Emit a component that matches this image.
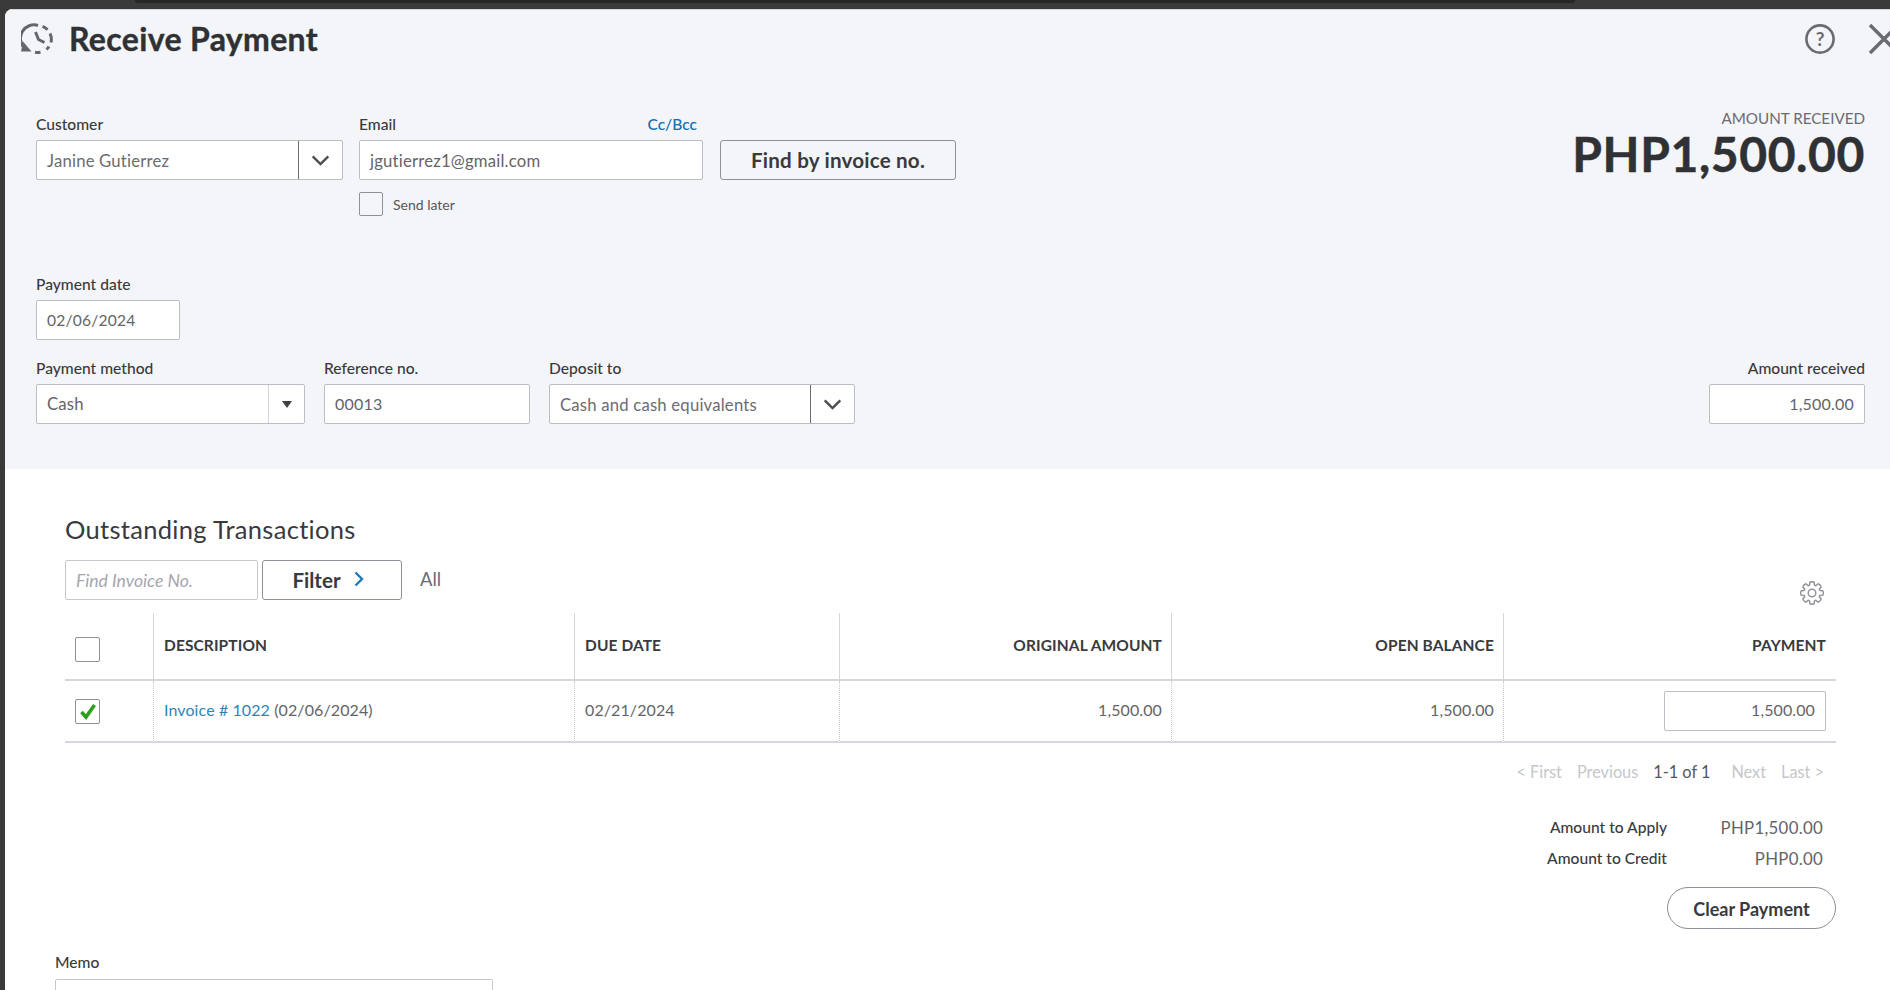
<script>
  // 8 tooth gear outline
  function gear() {
    let d = "";
    for (let i = 0; i < 8; i++) {
      const a = (i * Math.PI) / 4 - Math.PI / 2;
      const pt = (r, off) => {
        const x = 12 + r * Math.cos(a + off);
        const y = 12 + r * Math.sin(a + off);
        return `${x.toFixed(2)} ${y.toFixed(2)}`;
      };
      d += `${i ? "L" : "M"}${pt(8.2, -0.3)} L${pt(11, -0.2)} Q${pt(11.9, 0)} ${pt(11, 0.2)} L${pt(8.2, 0.3)} `;
    }
    return d + "Z";
  }
</script>

<div class="page">
  <div class="topstrip"><div class="tab"></div></div>
  <main class="panel">
    <section class="head">
      <header class="titlebar">
        <svg class="history" viewBox="0 0 32 32" width="32" height="32" fill="none" stroke="#66676c" stroke-width="3">
          <path d="M3.5 25 A13.5 13.5 0 0 1 17 2.5" />
          <path d="M21.5 3.4 A13.5 13.5 0 0 1 26.5 6.7" />
          <path d="M29 10.5 A13.5 13.5 0 0 1 30 19.5" />
          <path d="M28 23.5 A13.5 13.5 0 0 1 25.5 26.5" />
          <path d="M19.5 29.2 A13.5 13.5 0 0 1 14 29.2" />
          <path d="M14.5 9 L17.5 16.5 L23.5 19.5" stroke-linejoin="round" />
          <path d="M0 28.5 H10.5 L2 18.5 Z" fill="#66676c" stroke="none" />
        </svg>
        <h1>Receive Payment</h1>
        <div class="spacer"></div>
        <svg class="help" viewBox="0 0 32 32" width="32" height="32" fill="none" stroke="#6b6c72" stroke-width="2.6">
          <circle cx="16" cy="16" r="13.6" />
          <text x="16" y="22.5" text-anchor="middle" class="q">?</text>
        </svg>
        <svg class="close" viewBox="0 0 32 32" width="32" height="32" stroke="#6b6c72" stroke-width="3.4" fill="none">
          <path d="M2 2 L30 30 M30 2 L2 30" />
        </svg>
      </header>

      <div class="row-top">
        <div class="field">
          <label for="customer">Customer</label>
          <div class="combo w-customer">
            <span class="val gray low">Janine Gutierrez</span>
            <span class="arrow dark"><svg viewBox="0 0 20 12" width="19" height="11" fill="none" stroke="#4d4e52" stroke-width="2.6"><path d="M1.5 1.5 L10 10 L18.5 1.5" /></svg></span>
          </div>
        </div>
        <div class="field">
          <div class="label-row">
            <label for="email">Email</label>
            <a href="#cc" class="cc">Cc/Bcc</a>
          </div>
          <div class="input w-email word">jgutierrez1@gmail.com</div>
          <div class="send">
            <span class="check"></span>
            <span>Send later</span>
          </div>
        </div>
        <button class="find">Find by invoice no.</button>
        <div class="spacer"></div>
        <div class="total">
          <div class="total-label">AMOUNT RECEIVED</div>
          <div class="total-value">PHP1,500.00</div>
        </div>
      </div>

      <div class="field date">
        <label for="date">Payment date</label>
        <div class="input w-date tight">02/06/2024</div>
      </div>

      <div class="row-method">
        <div class="field">
          <label for="method">Payment method</label>
          <div class="combo w-method">
            <span class="val">Cash</span>
            <span class="arrow small"><svg viewBox="0 0 10 7" width="10" height="7"><path d="M0 0 H10 L5 7 Z" fill="#3f4044" /></svg></span>
          </div>
        </div>
        <div class="field">
          <label for="ref">Reference no.</label>
          <div class="input w-ref lift">00013</div>
        </div>
        <div class="field">
          <label for="deposit">Deposit to</label>
          <div class="combo w-deposit">
            <span class="val gray low">Cash and cash equivalents</span>
            <span class="arrow dark"><svg viewBox="0 0 20 12" width="19" height="11" fill="none" stroke="#4d4e52" stroke-width="2.6"><path d="M1.5 1.5 L10 10 L18.5 1.5" /></svg></span>
          </div>
        </div>
        <div class="spacer"></div>
        <div class="field right">
          <label for="amount">Amount received</label>
          <div class="input w-amount num lift">1,500.00</div>
        </div>
      </div>
    </section>

    <section class="body">
      <div class="tx">
        <h2>Outstanding Transactions</h2>
        <div class="tools">
          <div class="search">Find Invoice No.</div>
          <button class="filter">Filter
            <svg viewBox="0 0 10 16" width="10" height="16" fill="none" stroke="#1f7ab8" stroke-width="2.4"><path d="M1.5 1.5 L8 8 L1.5 14.5" /></svg>
          </button>
          <span class="all">All</span>
          <div class="spacer"></div>
          <svg class="gear" viewBox="0 0 24 24" width="24" height="24" fill="none" stroke="#94959a" stroke-width="1.5" stroke-linejoin="round">
            <path d={gear()} />
            <circle cx="12" cy="12" r="3.8" />
          </svg>
        </div>

        <div class="table">
          <div class="cell hd cb"><span class="check"></span></div>
          <div class="cell hd">DESCRIPTION</div>
          <div class="cell hd">DUE DATE</div>
          <div class="cell hd r">ORIGINAL AMOUNT</div>
          <div class="cell hd r">OPEN BALANCE</div>
          <div class="cell hd r last">PAYMENT</div>

          <div class="cell bd cb">
            <span class="check">
              <svg viewBox="0 0 20 20" width="20" height="20"><path d="M3.5 11 L8 16 L16.5 4" fill="none" stroke="#2ca01c" stroke-width="3.6" /></svg>
            </span>
          </div>
          <div class="cell bd"><a href="#invoice" class="link">Invoice # 1022</a>&nbsp;(02/06/2024)</div>
          <div class="cell bd">02/21/2024</div>
          <div class="cell bd r">1,500.00</div>
          <div class="cell bd r">1,500.00</div>
          <div class="cell bd r last"><div class="pay">1,500.00</div></div>
        </div>

        <div class="pager">
          <span>&lt; First</span>
          <span>Previous</span>
          <span class="cur">1-1 of 1</span>
          <span>Next</span>
          <span>Last &gt;</span>
        </div>

        <div class="sums">
          <span class="sl">Amount to Apply</span><span class="sv">PHP1,500.00</span>
          <span class="sl">Amount to Credit</span><span class="sv">PHP0.00</span>
        </div>
        <div class="clear-row"><button class="clear">Clear Payment</button></div>
      </div>

      <div class="memo">
        <label for="memo">Memo</label>
        <div class="memo-box"></div>
      </div>
    </section>
  </main>
</div>

<style>
  :global(body) {
    margin: 0;
    background: #3a3a3a;
    overflow: hidden;
  }
  .page {
    width: 1890px;
    height: 990px;
    overflow: hidden;
    font-family: "Lato", "Noto Sans", sans-serif;
    color: #393a3d;
    background: #3a3a3a;
  }
  .topstrip {
    height: 9px;
  }
  .tab {
    height: 3px;
    margin: 0 315px 0 135px;
    background: #262626;
    border-radius: 0 0 8px 8px;
  }
  .panel {
    margin-left: 5px;
    background: #fff;
    border-radius: 8px 0 0 0;
    overflow: hidden;
  }
  .head {
    background: #f4f5f8;
    height: 460px;
    padding: 13px 25px 0 31px;
    box-sizing: border-box;
    border-top: 1px solid #d4d7dc;
  }
  .titlebar {
    display: flex;
    align-items: center;
    margin-left: -15px;
    height: 32px;
  }
  .history {
    margin-right: 16px;
  }
  h1 {
    margin: 0;
    font-size: 32px;
    font-weight: 700;
    color: #303134;
    line-height: 32px;
    letter-spacing: 0.35px;
    -webkit-text-stroke: 0.4px #303134;
  }
  .help {
    margin-right: 32px;
  }
  .close {
    margin-right: -35px;
    flex: none;
  }
  .q {
    font-size: 19px;
    font-weight: 700;
    fill: #6b6c72;
    stroke: none;
    font-family: "Lato", sans-serif;
  }
  .spacer {
    flex: 1;
  }
  .row-top {
    display: flex;
    margin-top: 60px;
    gap: 16px;
    height: 160px;
  }
  .field {
    display: flex;
    flex-direction: column;
  }
  label,
  .label-row {
    font-size: 15.6px;
    font-weight: 500;
    color: #393a3d;
    line-height: 18px;
    height: 25px;
  }
  .label-row {
    display: flex;
    justify-content: space-between;
    padding-right: 6px;
  }
  .cc {
    color: #0f6fb0;
    text-decoration: none;
  }
  .input,
  .combo {
    height: 40px;
    box-sizing: border-box;
    background: #fff;
    border: 1px solid #babec5;
    border-radius: 2px;
    font-size: 16px;
    color: #636468;
    display: flex;
    align-items: center;
    letter-spacing: 0.2px;
  }
  .input {
    padding: 0 10px;
  }
  .word {
    font-size: 16.7px;
    padding-top: 1px;
  }
  .tight {
    font-size: 15.6px;
  }
  .lift {
    padding-bottom: 2px;
  }
  .val {
    flex: 1;
    padding-left: 10px;
    font-size: 16.7px;
  }
  .gray {
    color: #6b6c72;
  }
  .low {
    padding-top: 2px;
  }
  .arrow {
    height: 100%;
    display: flex;
    align-items: center;
    justify-content: center;
    border-left: 1px solid #d4d7dc;
  }
  .arrow.dark {
    width: 43px;
    border-left-color: #6b6c72;
  }
  .arrow.small {
    width: 35px;
  }
  .w-customer {
    width: 307px;
  }
  .w-email {
    width: 344px;
  }
  .w-date {
    width: 144px;
  }
  .w-method {
    width: 269px;
  }
  .w-ref {
    width: 206px;
  }
  .w-deposit {
    width: 306px;
  }
  .w-amount {
    width: 156px;
  }
  .num {
    justify-content: flex-end;
  }
  .send {
    display: flex;
    align-items: center;
    gap: 10px;
    margin-top: 12px;
    font-size: 14px;
    color: #55565a;
  }
  .check {
    display: inline-flex;
    align-items: center;
    justify-content: center;
    width: 25px;
    height: 25px;
    box-sizing: border-box;
    border: 1px solid #8d9096;
    border-radius: 2px;
    background: #fff;
  }
  .send .check {
    width: 24px;
    height: 24px;
    background: transparent;
  }
  .find {
    margin: 25px 0 0 1px;
    width: 236px;
    height: 40px;
    background: #f4f5f8;
    border: 1px solid #8d9096;
    border-radius: 3px;
    font: 700 20.6px "Lato", sans-serif;
    color: #393a3d;
    letter-spacing: 0.2px;
  }
  .total {
    text-align: right;
    margin-top: -5px;
  }
  .total-label {
    font-size: 15.2px;
    color: #6b6c72;
    line-height: 17px;
  }
  .total-value {
    font-size: 48px;
    font-weight: 700;
    color: #303134;
    line-height: 54px;
    letter-spacing: 0.6px;
    -webkit-text-stroke: 0.5px #303134;
  }
  .date {
    height: 84px;
  }
  .row-method {
    display: flex;
    gap: 19px;
  }
  .right {
    text-align: right;
  }
  .body {
    height: 521px;
  }
  .tx {
    padding: 45px 54px 0 60px;
  }
  h2 {
    margin: 0;
    font-size: 25.5px;
    font-weight: 400;
    color: #393a3d;
    line-height: 30px;
    letter-spacing: 0.3px;
  }
  .tools {
    display: flex;
    align-items: flex-start;
    margin-top: 16px;
    height: 53px;
    gap: 4px;
  }
  .search {
    width: 193px;
    height: 40px;
    box-sizing: border-box;
    border: 1px solid #c4c7cc;
    border-radius: 2px;
    padding: 9px 10px 0;
    font-size: 17.6px;
    font-style: italic;
    color: #a5a7ac;
  }
  .filter {
    width: 140px;
    height: 40px;
    padding: 0 8px 0 0;
    background: #fff;
    border: 1px solid #8d9096;
    border-radius: 3px;
    font: 700 20.6px "Lato", sans-serif;
    color: #393a3d;
    display: flex;
    align-items: center;
    justify-content: center;
    gap: 13px;
  }
  .filter svg {
    margin-top: -2px;
  }
  .all {
    margin: 8px 0 0 14px;
    font-size: 18.4px;
    color: #6b6c72;
  }
  .gear {
    margin: 21px 12px 0 0;
  }
  .table {
    display: grid;
    grid-template-columns: 89px 421px 265px 332px 332px 1fr;
    grid-template-rows: 68px 62px;
    font-size: 16px;
  }
  .cell {
    box-sizing: border-box;
    display: flex;
    align-items: center;
    padding: 0 9px 0 10px;
    border-right: 1px solid #d4d7dc;
    letter-spacing: 0.1px;
  }
  .hd {
    border-bottom: 2px solid #d4d7dc;
    font-weight: 700;
    font-size: 15.5px;
    color: #393a3d;
    padding-bottom: 3px;
  }
  .bd {
    border-bottom: 2px solid #d4d7dc;
    border-right: 1px dotted #c4c7cc;
    color: #636468;
    padding-bottom: 3px;
  }
  .r {
    justify-content: flex-end;
  }
  .last {
    border-right: 0;
    padding-right: 10px;
  }
  .cell.last:has(.pay),
  .bd.cb {
    padding-bottom: 0;
  }
  .hd.cb {
    padding-bottom: 0;
    padding-top: 6px;
  }
  .link {
    color: #2d84bc;
    text-decoration: none;
  }
  .pay {
    width: 162px;
    height: 40px;
    box-sizing: border-box;
    border: 1px solid #babec5;
    border-radius: 2px;
    display: flex;
    align-items: center;
    justify-content: flex-end;
    padding: 0 10px 3px 0;
  }
  .pager {
    display: flex;
    justify-content: flex-end;
    gap: 15px;
    margin-top: 19px;
    padding-right: 12px;
    font-size: 16.3px;
    line-height: 20px;
    color: #c4c7cc;
  }
  .pager .cur {
    color: #55565a;
    margin-right: 6px;
  }
  .sums {
    display: grid;
    grid-template-columns: auto 156px;
    justify-content: end;
    justify-items: end;
    margin-top: 35px;
    padding-right: 13px;
    row-gap: 10px;
    line-height: 21px;
  }
  .sl {
    font-size: 15.6px;
    font-weight: 500;
    color: #393a3d;
  }
  .sv {
    font-size: 16.8px;
    color: #636468;
    letter-spacing: 0.3px;
  }
  .clear-row {
    display: flex;
    justify-content: flex-end;
    margin-top: 18px;
  }
  .clear {
    width: 169px;
    height: 42px;
    padding-top: 2px;
    background: #fff;
    border: 1px solid #8d9096;
    border-radius: 21px;
    font: 700 18px "Lato", sans-serif;
    color: #393a3d;
  }
  .memo {
    padding: 24px 0 0 50px;
  }
  .memo label {
    display: block;
    height: 26px;
  }
  .memo-box {
    width: 438px;
    height: 60px;
    box-sizing: border-box;
    border: 1px solid #c4c7cc;
    border-radius: 2px;
  }
</style>
